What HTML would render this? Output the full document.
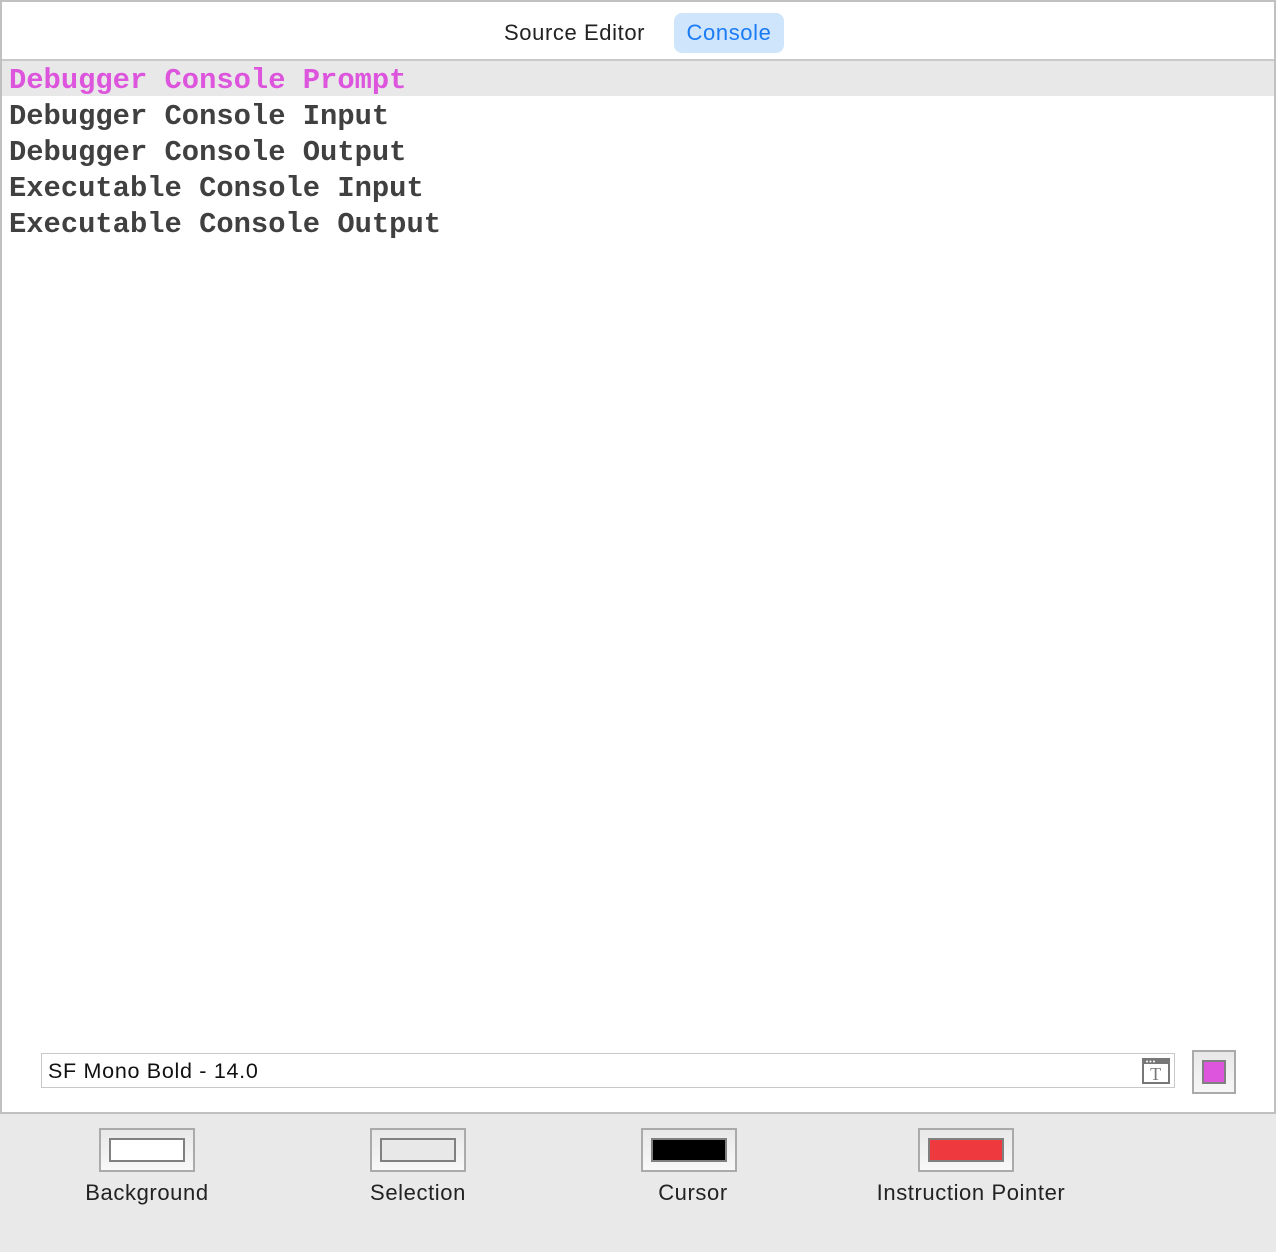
<!DOCTYPE html>
<html><head><meta charset="utf-8"><style>
*{margin:0;padding:0;box-sizing:border-box}
body{width:1276px;height:1252px;background:#e9e9e9;position:relative;overflow:hidden;font-family:"Liberation Sans",sans-serif}
.panel{position:absolute;left:0;top:0;width:1276px;height:1114px;background:#fff;border:2px solid #c0c0c0}
.tab{position:absolute;top:11px;height:40px;line-height:40px;font-size:22px;letter-spacing:0.6px;color:#222}
.sep{position:absolute;left:0;top:57px;width:1272px;height:2px;background:#c8c8c8}
.row{position:absolute;left:7px;height:36px;line-height:36px;font-family:"Liberation Mono",monospace;font-weight:bold;font-size:28.8px;color:#404040;white-space:pre}
.well{position:absolute;width:96px;height:44px;border:2px solid #aaa;background:linear-gradient(#e8e8e8,#f8f8f8)}
.well i{position:absolute;left:8px;top:8px;width:76px;height:24px;border:2px solid #808080}
.lbl{position:absolute;top:1180px;font-size:22px;letter-spacing:0.6px;color:#222;text-align:center;width:300px}
</style></head><body>
<div class="panel">
<div class="tab" style="left:502px">Source Editor</div>
<div class="tab" style="left:672px;width:110px;background:#cfe5fb;border-radius:8px;color:#1a7bf5;text-align:center">Console</div>
<div class="sep"></div>
<div style="position:absolute;left:0;top:59px;width:1272px;height:35px;background:#e8e8e8"></div>
<div class="row" style="top:61px;color:#dd55dd">Debugger Console Prompt</div>
<div class="row" style="top:97px">Debugger Console Input</div>
<div class="row" style="top:133px">Debugger Console Output</div>
<div class="row" style="top:169px">Executable Console Input</div>
<div class="row" style="top:205px">Executable Console Output</div>
<div style="position:absolute;left:39px;top:1051px;width:1134px;height:35px;border:1px solid #c8c8c8;font-size:21.5px;letter-spacing:0.7px;line-height:35px;padding-left:6px;color:#111">SF Mono Bold - 14.0
<svg style="position:absolute;right:4px;top:4px" width="28" height="26" viewBox="0 0 28 26"><rect x="1" y="1" width="26" height="24" fill="#fff" stroke="#777" stroke-width="2"/><rect x="1" y="1" width="26" height="5" fill="#777"/><circle cx="5" cy="3.5" r="1" fill="#fff"/><circle cx="8.5" cy="3.5" r="1" fill="#fff"/><circle cx="12" cy="3.5" r="1" fill="#fff"/><text x="14" y="22" text-anchor="middle" font-family="Liberation Serif" font-size="18" fill="#777">T</text></svg>
</div>
<div style="position:absolute;left:1190px;top:1048px;width:44px;height:44px;border:2px solid #aaa;background:linear-gradient(#e8e8e8,#f6f6f6)"><div style="position:absolute;left:8px;top:8px;width:24px;height:24px;border:2px solid #808080;background:#dd55dd"></div></div>
</div>
<div class="well" style="left:99px;top:1128px"><i style="background:#fff"></i></div>
<div class="well" style="left:370px;top:1128px"><i style="background:#e8e8e8"></i></div>
<div class="well" style="left:641px;top:1128px"><i style="background:#000"></i></div>
<div class="well" style="left:918px;top:1128px"><i style="background:#ee3a3f"></i></div>
<div class="lbl" style="left:-3px">Background</div>
<div class="lbl" style="left:268px">Selection</div>
<div class="lbl" style="left:543px">Cursor</div>
<div class="lbl" style="left:821px">Instruction Pointer</div>
</body></html>
